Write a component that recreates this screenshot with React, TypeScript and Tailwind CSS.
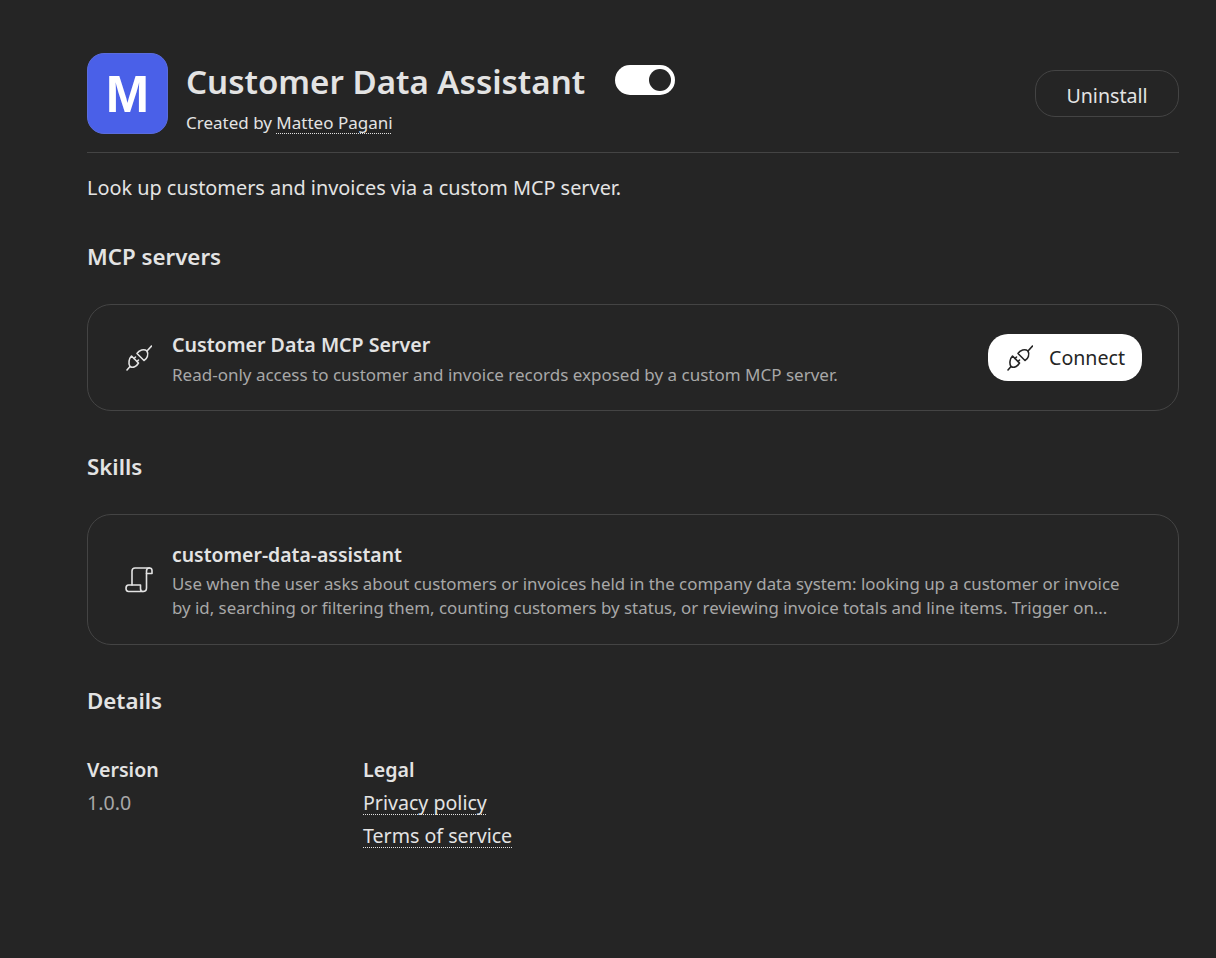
import React from "react";

function Plug({ className }: { className?: string }) {
  return (
    <svg viewBox="0 0 26 26" fill="none" stroke="currentColor" strokeWidth="1.6" strokeLinecap="round" strokeLinejoin="round" className={className}>
      <path d="M1 25 L4 21.5" />
      <path d="M5.5 11 L12.5 18 C10.5 21.5 7 23.5 4 21.5 C2 18.5 3 13.5 5.5 11 Z" />
      <path d="M8 13.5 L9.5 12 M11 16.5 L12.5 15" />
      <path d="M11 8.5 L18 15.5 C21 14 23 9.5 21 6 C18 3.5 13 5 11 8.5 Z" />
      <path d="M21 6 L25.5 1" />
    </svg>
  );
}

function Scroll({ className }: { className?: string }) {
  return (
    <svg viewBox="0 0 28 26" fill="none" stroke="currentColor" strokeWidth="1.6" strokeLinecap="round" strokeLinejoin="round" className={className}>
      <path d="M7 18 V4 C7 2.2 8.2 1 10 1 H24.5 C26 1 27 2.2 27 3.6 V6.5 H21.5" />
      <path d="M24.5 1 C22.8 1 21.5 2.2 21.5 4 V21 C21.5 23 20 24.5 18 24.5" />
      <path d="M3.5 18 H15.5 V21.5 C15.5 23.2 16.5 24.5 18 24.5 H3.5 C2 24.5 1 23.2 1 21.3 C1 19.4 2 18 3.5 18 Z" />
    </svg>
  );
}

const linkClass = "underline decoration-dotted decoration-1 underline-offset-[4px] [text-decoration-skip-ink:none]";

export default function App() {
  return (
    <div className="min-h-[958px] bg-[#252525] px-[87px] pr-[37px] pt-[53px] font-['Noto_Sans',sans-serif] text-[#e3e3e3]">
      <header className="flex h-[100px] items-start border-b border-[#444444]">
        <div className="flex h-[81px] w-[81px] items-center justify-center rounded-[17px] border border-[#5a6cdc] bg-[#4a60e8] font-['Liberation_Sans',sans-serif] text-[52px] font-bold text-white">
          M
        </div>
        <div className="ml-[18px]">
          <div className="flex items-center">
            <h1 className="text-[33.1px] leading-[58px] font-semibold">Customer Data Assistant</h1>
            <div className="mt-[-4px] ml-[30px] flex h-[30px] w-[60px] items-center justify-end rounded-full bg-white pr-[4px]">
              <span className="h-[22px] w-[22px] rounded-full bg-[#252525]" />
            </div>
          </div>
          <p className="text-[17px] leading-[24px] text-[#e3e3e3]">
            Created by{" "}
            <span className={linkClass}>Matteo Pagani</span>
          </p>
        </div>
        <button className="mt-[17px] ml-auto h-[47px] w-[144px] rounded-[20px] border border-[#444444] pt-[4px] text-[19.6px] text-[#e3e3e3]">
          Uninstall
        </button>
      </header>

      <p className="mt-[21px] text-[19.87px] leading-[28px]">Look up customers and invoices via a custom MCP server.</p>

      <h2 className="mt-[40px] text-[22.3px] leading-[30px] font-semibold">MCP servers</h2>

      <section className="mt-[32px] flex h-[107px] items-center rounded-[24px] border border-[#444444] pr-[36px] pl-[38px]">
        <Plug className="h-[26px] w-[26px] shrink-0 text-[#e3e3e3]" />
        <div className="ml-[20px] flex-1 pt-[3px]">
          <div className="text-[19.6px] leading-[28px] font-semibold">Customer Data MCP Server</div>
          <div className="mt-[3px] text-[17px] leading-[25px] text-[#a8a8a8]">
            Read-only access to customer and invoice records exposed by a custom MCP server.
          </div>
        </div>
        <button className="flex h-[47px] w-[154px] items-center rounded-[20px] bg-white pt-[1px] pl-[19px] text-[19.6px] text-[#252525]">
          <Plug className="h-[26px] w-[26px]" />
          <span className="ml-[16px]">Connect</span>
        </button>
      </section>

      <h2 className="mt-[41px] text-[22.3px] leading-[30px] font-semibold">Skills</h2>

      <section className="mt-[32px] flex h-[131px] items-center rounded-[24px] border border-[#444444] pr-[36px] pl-[37px]">
        <Scroll className="h-[26px] w-[28px] shrink-0 text-[#e3e3e3]" />
        <div className="ml-[19px] flex-1 pt-[2px]">
          <div className="text-[19.4px] leading-[28px] font-semibold">customer-data-assistant</div>
          <div className="mt-[3px] text-[16.85px] leading-[24px] whitespace-nowrap text-[#a8a8a8]">
            Use when the user asks about customers or invoices held in the company data system: looking up a customer or invoice
            <br />
            by id, searching or filtering them, counting customers by status, or reviewing invoice totals and line items. Trigger on...
          </div>
        </div>
      </section>

      <h2 className="mt-[41px] text-[22.3px] leading-[30px] font-semibold">Details</h2>

      <div className="mt-[37px] flex text-[19.6px] leading-[33px]">
        <div className="w-[276px]">
          <div className="font-semibold">Version</div>
          <div className="text-[#a8a8a8]">1.0.0</div>
        </div>
        <div>
          <div className="font-semibold">Legal</div>
          <div><span className={linkClass}>Privacy policy</span></div>
          <div><span className={linkClass}>Terms of service</span></div>
        </div>
      </div>
    </div>
  );
}
